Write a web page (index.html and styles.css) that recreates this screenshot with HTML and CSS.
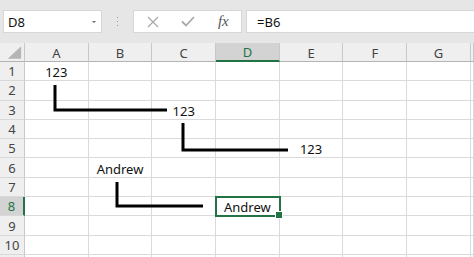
FILE: index.html
```html
<!DOCTYPE html>
<html lang="en">
<head>
    <meta charset="UTF-8">
    <meta name="viewport" content="width=device-width, initial-scale=1.0">
    <title>Sheet1</title>
    <link rel="stylesheet" href="styles.css">
</head>
<body>

<!-- Name box + formula bar -->
<div class="formula-bar">
    <div class="name-box">
        <span>D8</span>
        <span class="caret"></span>
    </div>
    <div class="grip"><i></i><i></i><i></i></div>
    <div class="fx-buttons">
        <span class="fx-btn">
            <svg width="12" height="12" viewBox="0 0 12 12"><path d="M1 1L11 11M11 1L1 11" stroke="#a9a9a9" stroke-width="1.3" fill="none"/></svg>
        </span>
        <span class="fx-btn">
            <svg width="14" height="11" viewBox="0 0 14 11"><path d="M1 5.5L5 9.5L13 1" stroke="#a9a9a9" stroke-width="1.8" fill="none"/></svg>
        </span>
        <span class="fx-btn fx">fx</span>
    </div>
    <div class="formula-input">=B6</div>
</div>

<!-- Worksheet grid -->
<div class="sheet" id="sheet">
    <svg class="arrows" width="474" height="214" viewBox="0 0 474 214">
        <path d="M55 42V67H167" />
        <path d="M183 80V107H288" />
        <path d="M117 139V163H203" />
    </svg>
</div>

<script>
    // Visible columns; the last one is only a sliver at the right edge
    const cols = ['A', 'B', 'C', 'D', 'E', 'F', 'G', ''];
    const data = {
        1: { A: '123' },
        3: { C: '123' },
        5: { E: '123' },
        6: { B: 'Andrew' },
        8: { D: 'Andrew' }
    };
    const activeCol = 'D';
    const activeRow = 8;
    const visibleRows = 10;
    const sheet = document.getElementById('sheet');

    function addCell(cls, text) {
        const div = document.createElement('div');
        div.className = cls;
        if (text) div.textContent = text;
        sheet.appendChild(div);
        return div;
    }

    // Corner with the select-all triangle
    const corner = addCell('corner');
    corner.innerHTML = '<svg width="25" height="19" viewBox="0 0 25 19"><path d="M22 3V16H8Z" fill="#b5b5b5"/></svg>';

    // Column headers
    cols.forEach(c => addCell(c && c === activeCol ? 'col-head active' : 'col-head', c));

    // Rows (one extra row peeks in at the bottom edge)
    for (let r = 1; r <= visibleRows + 1; r++) {
        const label = r <= visibleRows ? String(r) : '';
        addCell(r === activeRow ? 'row-head active' : 'row-head', label);
        cols.forEach(c => {
            const value = data[r] && data[r][c];
            const isActive = r === activeRow && c === activeCol;
            addCell(isActive ? 'cell selected' : 'cell', value);
        });
    }
</script>

</body>
</html>
```

FILE: styles.css
```css
/* Reset default margin and padding */
* {
    margin: 0;
    padding: 0;
    box-sizing: border-box;
}

body {
    font-family: "Noto Sans", "Open Sans", sans-serif;
    font-size: 13px;
    color: #111;
    background-color: #fff;
    width: 474px;
    height: 257px;
    overflow: hidden;
}

/* Formula bar */
.formula-bar {
    height: 43px;
    background-color: #e6e6e6;
    padding: 10px 0 10px 3px;
    display: flex;
}

.name-box {
    width: 99px;
    background-color: #fff;
    border: 1px solid #d6d6d6;
    display: flex;
    align-items: center;
    justify-content: space-between;
    padding: 1px 5px 0 4px;
}

.caret {
    width: 0;
    height: 0;
    border-left: 2px solid transparent;
    border-right: 2px solid transparent;
    border-top: 2px solid #666;
}

.grip {
    width: 31px;
    display: flex;
    flex-direction: column;
    align-items: center;
    justify-content: center;
    gap: 2.5px;
}

.grip i {
    width: 1.5px;
    height: 1.5px;
    background-color: #9a9a9a;
}

.fx-buttons {
    width: 109px;
    background-color: #fff;
    border: 1px solid #d6d6d6;
    display: flex;
    align-items: center;
    padding-left: 1px;
}

.fx-btn {
    width: 36px;
    display: flex;
    justify-content: center;
    align-items: center;
}

.fx {
    font-family: "Liberation Serif", serif;
    font-style: italic;
    font-size: 15px;
    color: #555;
}

.formula-input {
    flex: 1;
    margin-left: 4px;
    background-color: #fff;
    border: 1px solid #d6d6d6;
    border-right: none;
    display: flex;
    align-items: center;
    padding: 1px 0 0 10px;
}

/* Worksheet */
.sheet {
    position: relative;
    height: 214px;
    overflow: hidden;
    display: grid;
    grid-template-columns: 25px repeat(7, 63.7px) 1fr;
    grid-template-rows: 19px;
    grid-auto-rows: 19.3px;
}

.corner,
.col-head,
.row-head {
    background-color: #efefef;
    color: #444;
    display: flex;
    align-items: center;
    justify-content: center;
    line-height: 16px;
}

.corner {
    border-right: 1px solid #c8c8c8;
    border-bottom: 1px solid #b4b4b4;
}

.col-head {
    border-right: 1px solid #c8c8c8;
    border-bottom: 1px solid #b4b4b4;
    padding-top: 1px;
}

.row-head {
    border-right: 1px solid #c8c8c8;
    border-bottom: 1px solid #d8d8d8;
}

.col-head.active {
    background-color: #d3d3d3;
    color: #217346;
    border-bottom: 2px solid #217346;
}

.row-head.active {
    background-color: #d3d3d3;
    color: #217346;
    border-right: 2px solid #217346;
}

.cell {
    border-right: 1px solid #dadada;
    border-bottom: 1px solid #dadada;
    display: flex;
    align-items: flex-end;
    justify-content: center;
    line-height: 16px;
    white-space: nowrap;
}

.cell.selected {
    position: relative;
    z-index: 1;
    outline: 2px solid #217346;
    outline-offset: -1px;
}

.cell.selected::after {
    content: "";
    position: absolute;
    right: -4px;
    bottom: -4px;
    width: 6px;
    height: 6px;
    background-color: #217346;
    border: 1px solid #fff;
}

/* Connector lines drawn over the grid */
.arrows {
    position: absolute;
    top: 0;
    left: 0;
    z-index: 2;
    pointer-events: none;
}

.arrows path {
    fill: none;
    stroke: #000;
    stroke-width: 3;
}
```
